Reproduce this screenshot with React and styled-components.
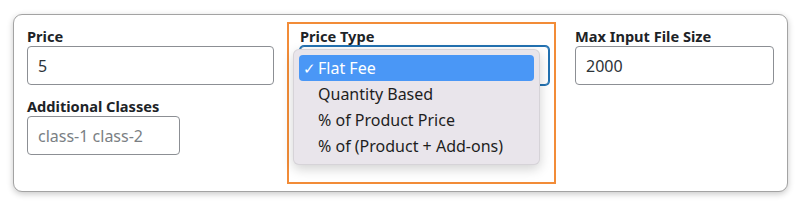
import React from 'react';
import styled, { createGlobalStyle } from 'styled-components';

const GlobalStyle = createGlobalStyle`
    html, body {
        margin: 0;
        padding: 0;
        background: #ffffff;
    }
    body {
        font-family: "Noto Sans", "Liberation Sans", Arial, sans-serif;
    }
`;

const Page = styled.div`
    width: 800px;
    height: 206px;
    padding: 14px 12px 0 13px;
    box-sizing: border-box;
`;

const Card = styled.div`
    height: 178px;
    padding: 12px 12px 8px 13px;
    box-sizing: border-box;

    display: grid;
    grid-template-columns: 247px 249px 199px;
    column-gap: 26px;
    align-items: stretch;

    border: 1px solid #a3a3a3;
    border-radius: 9px;
    background: #ffffff;
    box-shadow: 0 2px 6px rgba(0, 0, 0, 0.22);
`;

const Column = styled.div`
    position: relative;
    display: flex;
    flex-direction: column;
    align-items: flex-start;

    &::before {
        content: ${({ $highlighted }) => ($highlighted ? '""' : 'none')};
        position: absolute;
        left: -13px;
        right: -7px;
        top: -5px;
        bottom: -1px;
        border: 2px solid #f28c38;
        pointer-events: none;
    }
`;

const Label = styled.div`
    height: 18px;
    margin-bottom: 1px;

    font-size: 14.6px;
    font-weight: 700;
    line-height: 18px;
    white-space: nowrap;
    color: #1d2327;
`;

const Input = styled.div`
    width: ${({ $width }) => $width || '100%'};
    height: 39px;
    padding: 0 10px;
    margin-bottom: ${({ $gap }) => $gap || '0px'};
    box-sizing: border-box;

    display: flex;
    align-items: center;

    border: 1px solid ${({ $focused }) => ($focused ? '#2271b1' : '#8c8f94')};
    box-shadow: ${({ $focused }) => ($focused ? '0 0 0 1px #2271b1' : 'none')};
    border-radius: 4px;
    background: #ffffff;

    font-size: 16px;
    color: ${({ $placeholder }) => ($placeholder ? '#7b7f84' : '#2c3338')};
`;

const SelectWrap = styled.div`
    position: relative;
    width: 100%;
`;

const Menu = styled.ul`
    position: absolute;
    left: -7px;
    top: 3px;
    width: 247px;
    margin: 0;
    padding: 5px 5px 5px;
    box-sizing: border-box;
    list-style: none;

    border-radius: 6px;
    border: 1px solid rgba(0, 0, 0, 0.08);
    background: #e9e5eb;
    box-shadow: 0 4px 12px rgba(0, 0, 0, 0.18);
`;

const Option = styled.li`
    height: 26px;
    padding-left: 4px;
    box-sizing: border-box;

    display: flex;
    align-items: center;

    border-radius: 4px;
    background: ${({ $active }) => ($active ? '#4a97f6' : 'transparent')};

    font-size: 16px;
    line-height: 20px;
    color: ${({ $active }) => ($active ? '#ffffff' : '#1e1e1e')};
`;

const Check = styled.span`
    width: 15px;
    flex-shrink: 0;
    font-size: 15px;
`;

const options = ['Flat Fee', 'Quantity Based', '% of Product Price', '% of (Product + Add-ons)'];

const App = () => {
    return (
        <Page>
            <GlobalStyle />
            <Card>
                <Column>
                    <Label>Price</Label>
                    <Input $gap="12px">5</Input>
                    <Label>Additional Classes</Label>
                    <Input $width="153px" $placeholder>class-1 class-2</Input>
                </Column>
                <Column $highlighted>
                    <Label>Price Type</Label>
                    <SelectWrap>
                        <Input $focused />
                        <Menu>
                            {options.map((opt, i) => (
                                <Option key={opt} $active={i === 0}>
                                    <Check>{i === 0 ? '✓' : ''}</Check>
                                    {opt}
                                </Option>
                            ))}
                        </Menu>
                    </SelectWrap>
                </Column>
                <Column>
                    <Label>Max Input File Size</Label>
                    <Input>2000</Input>
                </Column>
            </Card>
        </Page>
    );
};

export default App;
